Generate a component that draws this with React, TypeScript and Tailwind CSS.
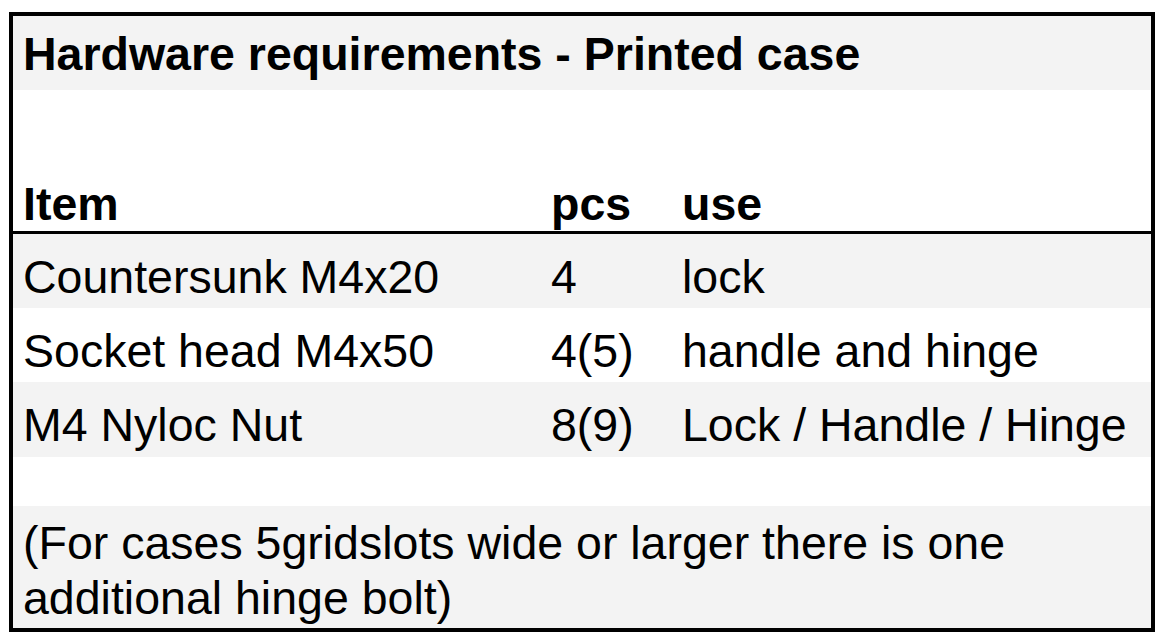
const rows = [
  { item: "Countersunk M4x20", pcs: "4", use: "lock", shade: true, h: "h-[74px]" },
  { item: "Socket head M4x50", pcs: "4(5)", use: "handle and hinge", shade: false, h: "h-[74px]" },
  { item: "M4 Nyloc Nut", pcs: "8(9)", use: "Lock / Handle / Hinge", shade: true, h: "h-[75px]" },
];

const HardwareTable = () => {
  return (
    <div className="min-h-screen bg-white pl-[9px] pt-[12px] font-['Liberation_Sans',Arial,sans-serif] text-black">
      <div className="w-[1146px] border-4 border-black text-[46.5px] leading-[53px]">
        {/* title */}
        <div className="h-[74px] bg-[#f3f3f3] pl-[10px] pt-[12px] font-bold">
          Hardware requirements - Printed case
        </div>

        {/* column headings */}
        <div className="grid h-[144px] grid-cols-[528px_131px_1fr] items-end border-b-[3px] border-black font-bold">
          <div className="pl-[10px]">Item</div>
          <div className="pl-[10px]">pcs</div>
          <div className="pl-[10px]">use</div>
        </div>

        {rows.map((row) => (
          <div
            key={row.item}
            className={`grid grid-cols-[528px_131px_1fr] items-start pt-[17px] ${row.h} ${row.shade ? "bg-[#f3f3f3]" : "bg-white"}`}
          >
            <div className="pl-[10px]">{row.item}</div>
            <div className="pl-[10px]">{row.pcs}</div>
            <div className="pl-[10px] whitespace-nowrap">{row.use}</div>
          </div>
        ))}

        <div className="h-[49px] bg-white" />

        <div className="h-[122px] bg-[#f3f3f3] pl-[10px] pr-[10px] pt-[10px] leading-[55px]">
          <p>
            (For cases 5gridslots wide or larger there is one additional hinge bolt)
          </p>
        </div>
      </div>
    </div>
  );
};

export default HardwareTable;
